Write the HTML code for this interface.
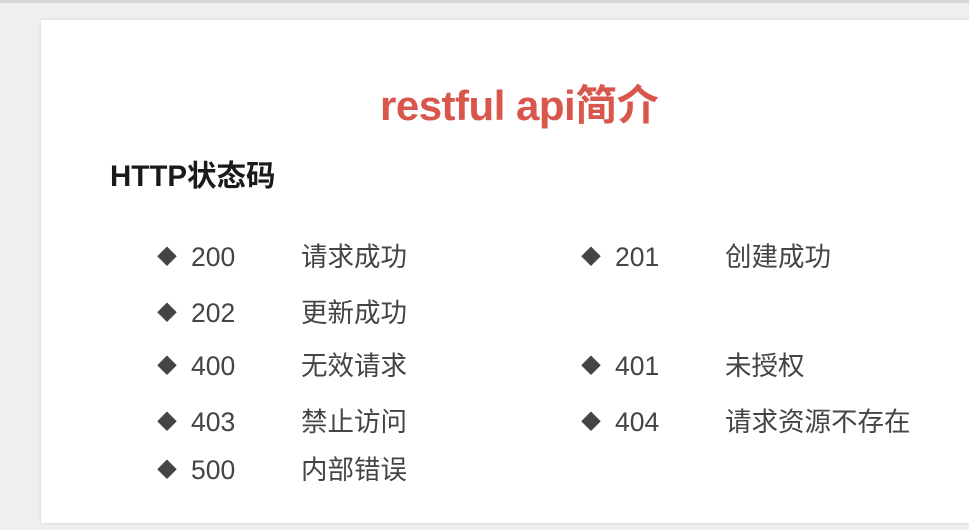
<!DOCTYPE html><html><head><meta charset="utf-8"><style>
body{margin:0;width:969px;height:530px;background:#efefef;position:relative;overflow:hidden;font-family:"Liberation Sans","Noto Sans CJK SC",sans-serif}
.top{position:absolute;left:0;top:0;width:969px;height:3px;background:#d8d8d8}
.slide{position:absolute;left:41px;top:20px;width:930px;height:503px;background:#fff;box-shadow:0 0 3px #ccc}
.t{position:absolute;white-space:nowrap}
.title{left:380px;top:72px;font-size:42px;font-weight:bold;color:#d8564c;letter-spacing:-0.5px}
.h{left:110px;top:153px;font-size:29.5px;font-weight:bold;color:#1a1a1a}
.r{font-size:26.5px;color:#444;line-height:30px}
.d{font-size:20px;color:#444;line-height:30px}
</style></head><body><div class="top"></div><div class="slide"></div>
<div class="t title">restful api简介</div>
<div class="t h">HTTP状态码</div>
<div class="t d" style="left:157px;top:243px">◆</div><div class="t r" style="left:191px;top:242px">200</div><div class="t r" style="left:301px;top:242px">请求成功</div>
<div class="t d" style="left:581px;top:243px">◆</div><div class="t r" style="left:615px;top:242px">201</div><div class="t r" style="left:725px;top:242px">创建成功</div>
<div class="t d" style="left:157px;top:299px">◆</div><div class="t r" style="left:191px;top:298px">202</div><div class="t r" style="left:301px;top:298px">更新成功</div>
<div class="t d" style="left:157px;top:352px">◆</div><div class="t r" style="left:191px;top:351px">400</div><div class="t r" style="left:301px;top:351px">无效请求</div>
<div class="t d" style="left:581px;top:352px">◆</div><div class="t r" style="left:615px;top:351px">401</div><div class="t r" style="left:725px;top:351px">未授权</div>
<div class="t d" style="left:157px;top:408px">◆</div><div class="t r" style="left:191px;top:407px">403</div><div class="t r" style="left:301px;top:407px">禁止访问</div>
<div class="t d" style="left:581px;top:408px">◆</div><div class="t r" style="left:615px;top:407px">404</div><div class="t r" style="left:725px;top:407px">请求资源不存在</div>
<div class="t d" style="left:157px;top:456px">◆</div><div class="t r" style="left:191px;top:455px">500</div><div class="t r" style="left:301px;top:455px">内部错误</div>
</body></html>
